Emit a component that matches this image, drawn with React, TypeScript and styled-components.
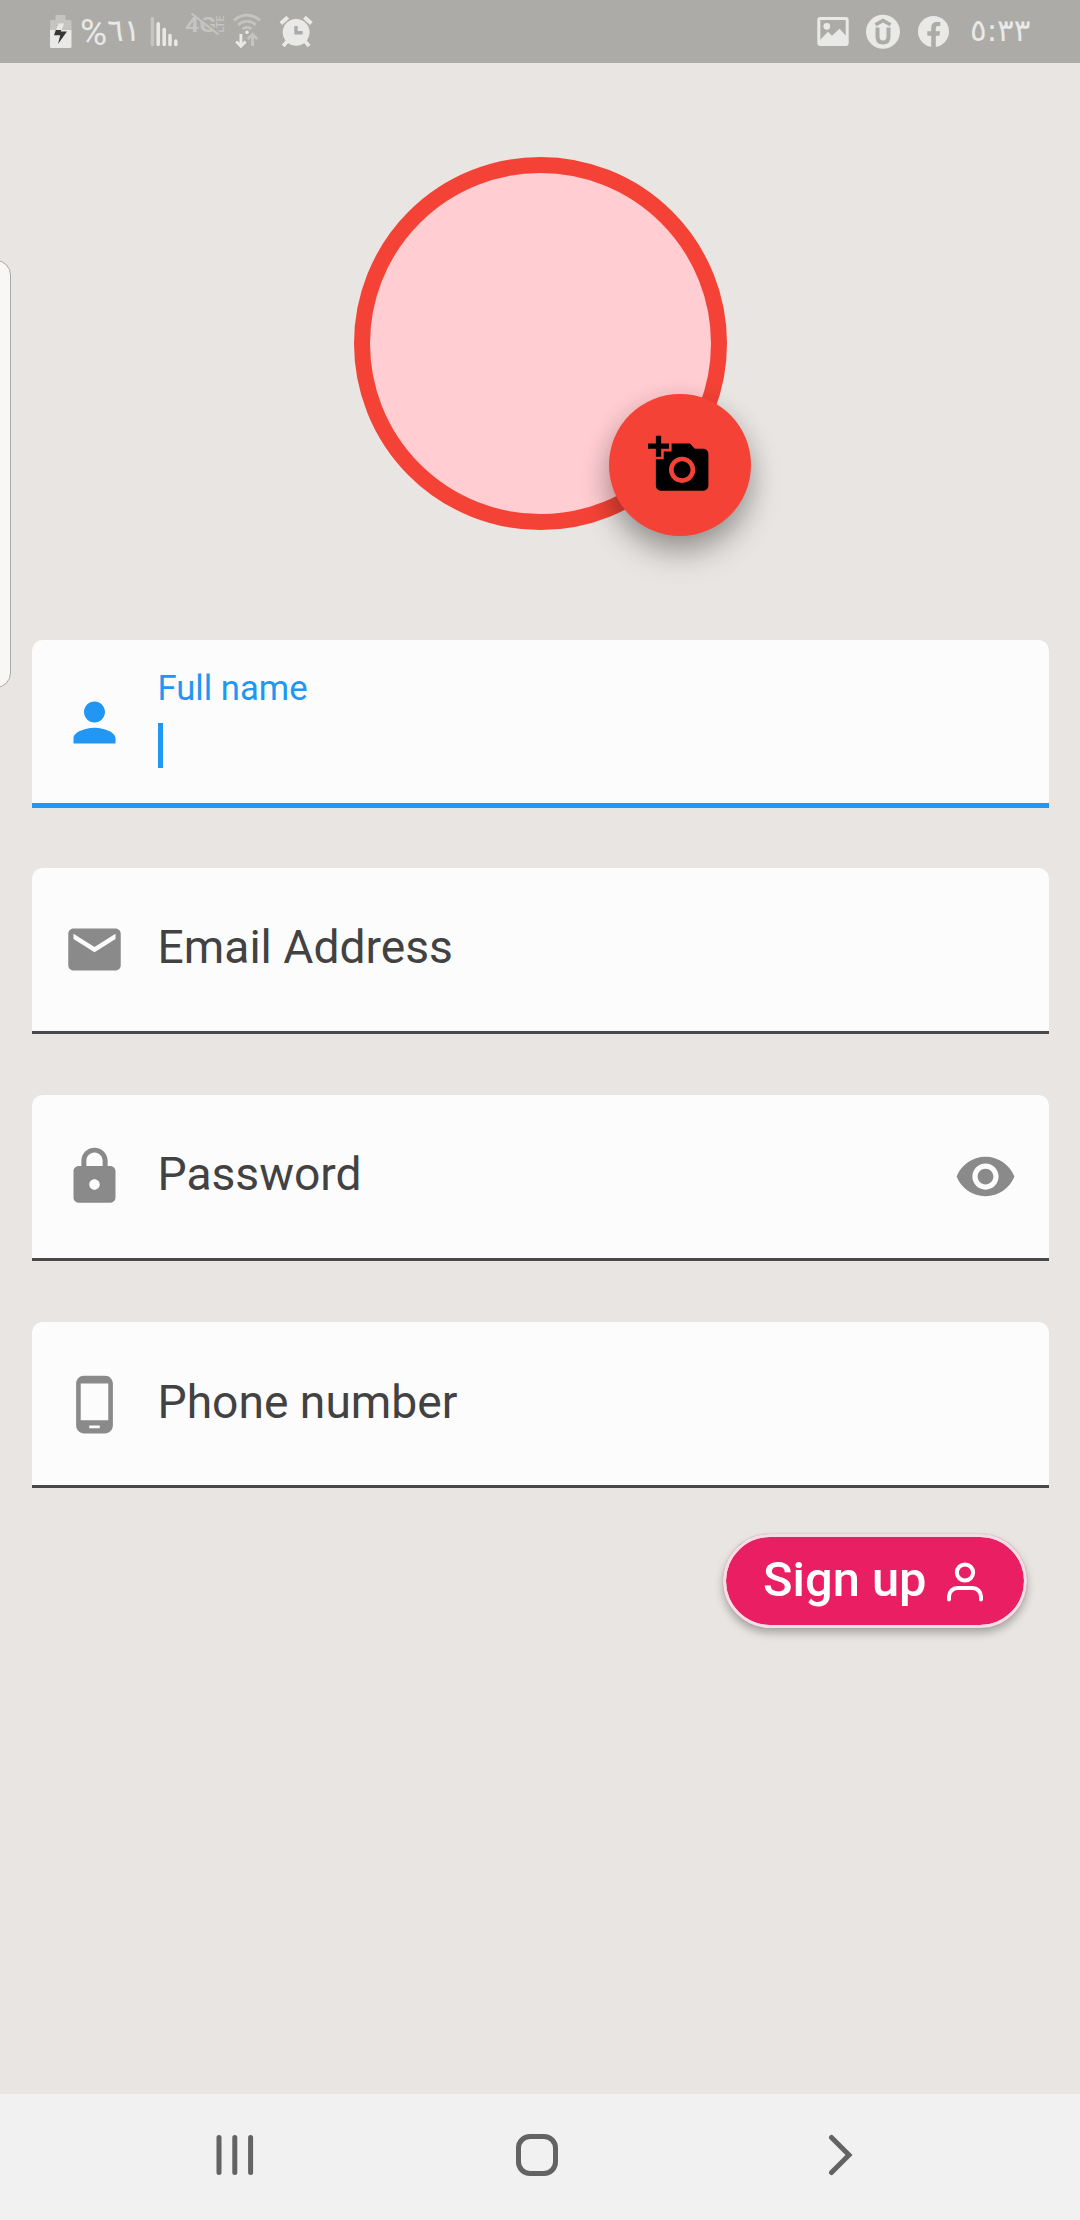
import React from 'react';
import styled, { createGlobalStyle } from 'styled-components';
import { MdAddAPhoto, MdPerson, MdEmail, MdLock, MdPhoneAndroid, MdRemoveRedEye } from 'react-icons/md';

const GlobalStyle = createGlobalStyle`
  body { margin: 0; background: #e8e5e2; }
  *, *::before, *::after { box-sizing: border-box; }
  svg { display: block; flex: none; }
`;

const Screen = styled.div`
  position: relative;
  display: flex;
  flex-direction: column;
  width: 1080px;
  height: 2220px;
  overflow: hidden;
  background: #e8e5e2;
  font-family: Roboto, 'Noto Sans', sans-serif;
`;

const StatusBar = styled.header`
  display: flex;
  justify-content: space-between;
  height: 63px;
  padding: 0 50px;
  background: #acaba7;
  color: #e9e9e7;
`;

const StatusGroup = styled.div`
  display: flex;
  height: 63px;
`;

const StatusItem = styled.span<{ $gap?: number }>`
  display: block;
  margin-left: ${(p) => p.$gap ?? 0}px;
`;

const Percent = styled.span`
  display: flex;
  width: 64px;
  margin-left: 8px;
  direction: ltr;
  unicode-bidi: bidi-override;
  font-size: 37px;
  line-height: 65px;
`;

const Digits = styled.span`
  font-family: 'DejaVu Sans', sans-serif;
  font-size: 31px;
  line-height: 61px;
  letter-spacing: -1px;
  unicode-bidi: bidi-override;
`;

const Clock = styled(Digits)`
  width: 60px;
  margin-left: 21px;
  letter-spacing: -0.6px;
  white-space: nowrap;
`;

const EdgeHandle = styled.div`
  position: absolute;
  left: -20px;
  top: 260px;
  width: 31px;
  height: 428px;
  border: 1px solid #a9a8a6;
  border-radius: 15px;
  background: #f8f7f5;
`;

const Content = styled.main`
  display: flex;
  flex: 1;
  flex-direction: column;
  padding: 94px 31.5px 0;
`;

const Avatar = styled.div`
  position: relative;
  align-self: center;
  width: 373px;
  height: 373px;
  border: 16px solid #f44336;
  border-radius: 50%;
  background: #ffcdd2;
`;

const PhotoButton = styled.button`
  position: absolute;
  left: 239px;
  top: 220.5px;
  display: flex;
  align-items: center;
  justify-content: center;
  width: 142px;
  height: 142px;
  padding: 0;
  border: 0;
  border-radius: 50%;
  background: #f44336;
  color: #000;
  box-shadow: 0 18px 32px -2px rgba(0, 0, 0, 0.3), 0 6px 26px rgba(0, 0, 0, 0.12);
`;

const Form = styled.form`
  display: flex;
  flex-direction: column;
  margin-top: 110.2px;
`;

const Slot = styled.div`
  height: 227.4px;
`;

const Field = styled.label<{ $focused?: boolean }>`
  display: flex;
  align-items: flex-start;
  height: ${(p) => (p.$focused ? 167.4 : 166)}px;
  border-radius: 10.5px 10.5px 0 0;
  border-bottom: ${(p) => (p.$focused ? '5px solid #2196f3' : '3px solid #494949')};
  background: #fcfcfc;
  color: ${(p) => (p.$focused ? '#2196f3' : '#424242')};
`;

const IconCell = styled.span<{ $focused?: boolean }>`
  display: flex;
  justify-content: center;
  width: 126px;
  padding-top: 50.5px;
  color: ${(p) => (p.$focused ? '#2196f3' : '#8a8a8a')};
`;

const LabelCell = styled.span`
  display: flex;
  flex: 1;
  flex-direction: column;
`;

const Placeholder = styled.span`
  margin-top: 51.3px;
  font-size: 46.2px;
  line-height: 56px;
`;

const FloatingLabel = styled.span`
  margin-top: 26.6px;
  font-size: 34.65px;
  line-height: 42px;
`;

const Caret = styled.span`
  width: 5.5px;
  height: 45px;
  margin-top: 14.2px;
  background: #2196f3;
`;

const SignUp = styled.button`
  display: flex;
  align-self: flex-end;
  align-items: flex-start;
  width: 304px;
  height: 94px;
  margin: -15.6px 21.5px 0 0;
  padding: 0 0 0 37px;
  border: 3px solid #f6dde5;
  border-radius: 47px;
  background: #e91e63;
  background-clip: padding-box;
  color: #fff;
  box-shadow: 0 0 1px rgba(120, 40, 70, 0.5), 0 5px 8px rgba(0, 0, 0, 0.28);
  font: 500 48.8px/58px Roboto, sans-serif;
`;

const SignUpText = styled.span`
  margin-top: 13.6px;
  width: 182px;
  text-align: left;
  white-space: nowrap;
`;

const NavBar = styled.nav`
  display: flex;
  align-items: center;
  height: 126px;
  padding: 0 0 4px 215px;
  background: #f1f1f1;
`;

const NavItem = styled.span<{ $gap?: number }>`
  display: block;
  margin-left: ${(p) => p.$gap ?? 0}px;
`;

const DIM = '#c5c4c1';
const LIT = '#e9e9e7';

const BatteryIcon = () => (
  <svg width="22" height="63" viewBox="0 0 22 63">
    <path d="M5.500 15h10v5H20a1.500 1.500 0 0 1 1.500 1.500V30H0v-8.500A1.500 1.500 0 0 1 1.500 20h4z" fill={DIM} />
    <path d="M0 30h21.500v16.500a1.500 1.500 0 0 1-1.500 1.500H1.500A1.500 1.500 0 0 1 0 46.500z" fill={LIT} />
    <path d="M8.700 23.500h5.500L11.500 30H6z" fill={LIT} />
    <path d="M5.800 30h5.600l-.8 1.500h6.400L8 44l2.200-8.800H4z" fill="#373737" />
  </svg>
);

const SignalIcon = () => (
  <svg width="28" height="63" viewBox="0 0 28 63" strokeWidth="3.500" strokeLinecap="round" stroke={LIT}>
    <path d="M2.400 18.500v26" stroke={DIM} />
    <path d="M8.200 23.800v20.700M14.200 29.500v15M20 35.500v9M25.800 41v3.500" />
  </svg>
);

const LteIcon = () => (
  <svg width="40" height="63" viewBox="0 0 40 63" fill={DIM}>
    <text x="0" y="31.700" fontFamily="Roboto, sans-serif" fontWeight="700" fontSize="21" textLength="31" lengthAdjust="spacingAndGlyphs">4G</text>
    <text transform="translate(38.500 32.500) rotate(-90)" fontFamily="Roboto, sans-serif" fontWeight="500" fontSize="10.500" textLength="17" lengthAdjust="spacingAndGlyphs">LTE</text>
    <path d="M8.300 12.300l27 21.500" stroke="#acaba7" strokeWidth="2" />
    <path d="M6.500 13.500l27 21" stroke={DIM} strokeWidth="2.200" />
  </svg>
);

const WifiIcon = () => (
  <svg width="28" height="63" viewBox="0 0 28 63" fill="none" strokeWidth="2.900">
    <path d="M1 20.500a18.500 18.500 0 0 1 26 0M5.300 25a12.300 12.300 0 0 1 17.400 0M9.600 29.200a6.200 6.200 0 0 1 8.800 0" stroke={DIM} />
    <circle cx="14" cy="32.300" r="1.800" fill={LIT} />
    <path d="M7.900 34v12M3.200 41.500l4.700 4.700 4.700-4.700" stroke={LIT} />
    <path d="M19.500 46V34.500M14.800 39l4.700-4.700 4.700 4.700" stroke={DIM} />
  </svg>
);

const AlarmIcon = () => (
  <svg width="34" height="63" viewBox="0 0 34 63" fill="none" stroke={LIT}>
    <path d="M1.800 23.400l7-6.200M32.400 23.400l-7-6.200" strokeWidth="4" />
    <path d="M9.400 40l-5.200 6M24.900 40l5.200 6" strokeWidth="3.600" />
    <circle cx="17.100" cy="32.300" r="13.400" fill={LIT} stroke="none" />
    <path d="M17 26v6.800h6.700" stroke="#acaba7" strokeWidth="3.400" />
  </svg>
);

const GalleryIcon = () => (
  <svg width="32" height="63" viewBox="0 0 32 63">
    <rect x="1.800" y="18.500" width="28.400" height="26" rx="1.500" fill="none" stroke={LIT} strokeWidth="3" />
    <circle cx="9.800" cy="26.300" r="3.400" fill={LIT} />
    <path d="M3 40l8-8.300 4 4 7.500-7 6.500 7V44H3z" fill={LIT} />
  </svg>
);

const UpArrowBadge = () => (
  <svg width="34" height="63" viewBox="0 0 34 63">
    <circle cx="17" cy="31.800" r="17" fill={LIT} />
    <g fill="none" stroke="#acaba7">
      <path d="M9.500 24.800l7.500-4.300 7.500 4.300" strokeWidth="3.600" />
      <path d="M11.500 27.500v9.300q0 5.700 5.500 5.700t5.500-5.700v-9.300" strokeWidth="4" />
    </g>
  </svg>
);

const FacebookBadge = () => (
  <svg width="31" height="63" viewBox="0 0 31 63">
    <circle cx="15.500" cy="31.500" r="15.500" fill={LIT} />
    <path d="M13.200 47.500V35.800H9.300v-4.500h3.900v-3.400q0-5.900 5.800-5.900h3.300v4h-2.400q-2.100 0-2.100 2.200v3.100h4.300l-.7 4.500h-3.600v11.700z" fill="#acaba7" />
  </svg>
);

const ProfileOutline = () => (
  <svg width="40" height="88" viewBox="0 0 40 88" fill="none" stroke="#fff" strokeWidth="4" strokeLinecap="round">
    <circle cx="20" cy="35.500" r="8.100" />
    <path d="M4 62.500v-3a8.500 8.500 0 0 1 8.500-8.500h15a8.500 8.500 0 0 1 8.500 8.500v3" />
  </svg>
);

const RecentsIcon = () => (
  <svg width="39" height="44" viewBox="0 0 39 44" stroke="#636363" strokeWidth="5" strokeLinecap="round">
    <path d="M4 4.500v35M19.800 4.500v35M35.600 4.500v35" />
  </svg>
);

const HomeIcon = () => (
  <svg width="44" height="44" viewBox="0 0 44 44">
    <rect x="3.500" y="3.500" width="37" height="37" rx="11.500" fill="none" stroke="#636363" strokeWidth="5" />
  </svg>
);

const NextIcon = () => (
  <svg width="26" height="44" viewBox="0 0 26 44">
    <path d="M3.500 4.500L21 22 3.500 39.500" fill="none" stroke="#636363" strokeWidth="5" strokeLinecap="round" />
  </svg>
);

const fields = [
  { label: 'Email Address', Icon: MdEmail },
  { label: 'Password', Icon: MdLock, reveal: true },
  { label: 'Phone number', Icon: MdPhoneAndroid },
];

export default function App() {
  return (
    <Screen>
      <GlobalStyle />
      <StatusBar>
        <StatusGroup>
          <BatteryIcon />
          <Percent>
            %<Digits>٦١</Digits>
          </Percent>
          <StatusItem $gap={6}><SignalIcon /></StatusItem>
          <StatusItem $gap={7}><LteIcon /></StatusItem>
          <StatusItem $gap={8}><WifiIcon /></StatusItem>
          <StatusItem $gap={18}><AlarmIcon /></StatusItem>
        </StatusGroup>
        <StatusGroup>
          <GalleryIcon />
          <StatusItem $gap={17}><UpArrowBadge /></StatusItem>
          <StatusItem $gap={18}><FacebookBadge /></StatusItem>
          <Clock>٥:٣٣</Clock>
        </StatusGroup>
      </StatusBar>
      <Content>
        <Avatar>
          <PhotoButton type="button" aria-label="Add photo">
            <MdAddAPhoto size={63} />
          </PhotoButton>
        </Avatar>
        <Form>
          <Slot>
            <Field $focused>
              <IconCell $focused><MdPerson size={63} /></IconCell>
              <LabelCell>
                <FloatingLabel>Full name</FloatingLabel>
                <Caret />
              </LabelCell>
            </Field>
          </Slot>
          {fields.map(({ label, Icon, reveal }) => (
            <Slot key={label}>
              <Field>
                <IconCell><Icon size={63} /></IconCell>
                <LabelCell><Placeholder>{label}</Placeholder></LabelCell>
                {reveal && <IconCell><MdRemoveRedEye size={63} /></IconCell>}
              </Field>
            </Slot>
          ))}
          <SignUp type="button">
            <SignUpText>Sign up</SignUpText>
            <ProfileOutline />
          </SignUp>
        </Form>
      </Content>
      <EdgeHandle />
      <NavBar>
        <NavItem><RecentsIcon /></NavItem>
        <NavItem $gap={261}><HomeIcon /></NavItem>
        <NavItem $gap={269}><NextIcon /></NavItem>
      </NavBar>
    </Screen>
  );
}
